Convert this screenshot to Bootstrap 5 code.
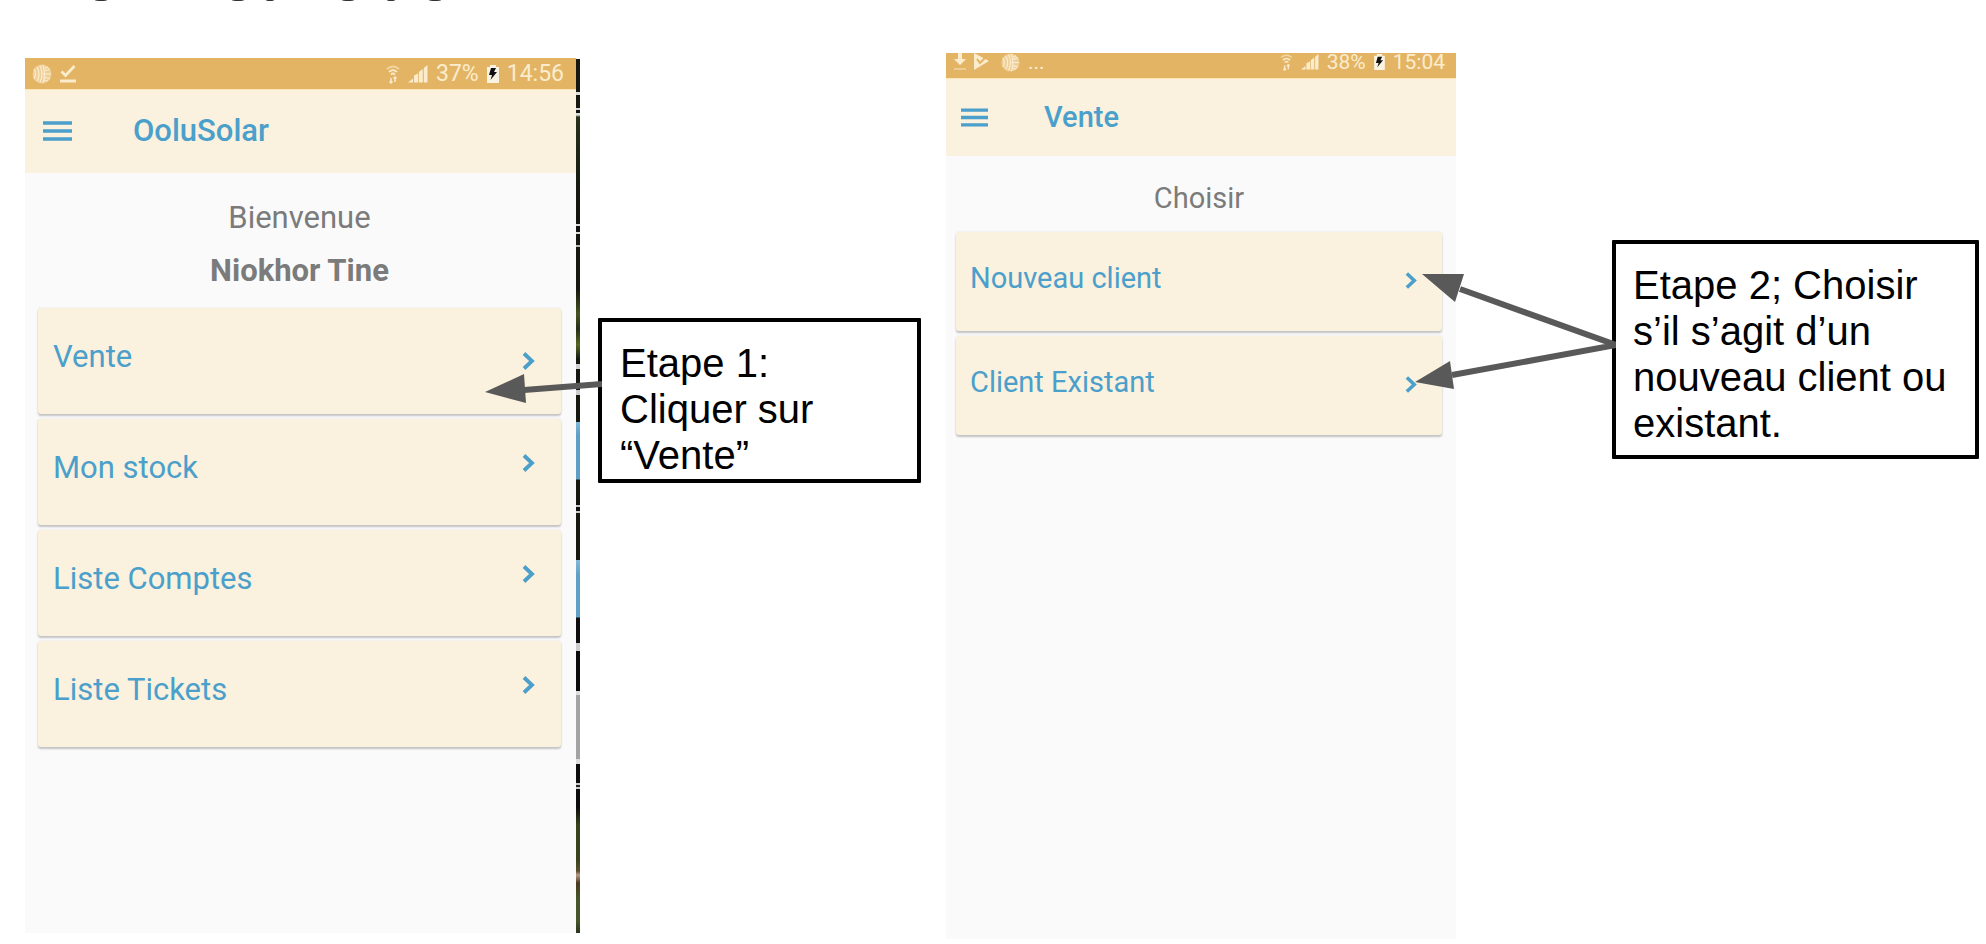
<!DOCTYPE html>
<html lang="fr">
<head>
<meta charset="utf-8">
<meta name="viewport" content="width=device-width, initial-scale=1">
<title>OoluSolar – Vente</title>
<link rel="stylesheet" href="https://cdn.jsdelivr.net/npm/bootstrap@5.3.0/dist/css/bootstrap.min.css">
<style>
  body { background: #fff; font-family: "Liberation Sans", Arial, sans-serif; overflow-x: hidden; }

  /* Slide: phone, note, phone, note, with the margins as their own tracks */
  .slide {
    display: grid;
    min-height: 100vh;
    grid-template-columns:
      minmax(0, 25fr) minmax(0, 555fr) minmax(0, 18fr) minmax(0, 323fr) minmax(0, 25fr)
      minmax(0, 510fr) minmax(0, 156fr) minmax(0, 367fr) minmax(0, 7fr);
  }
  .heading-tail { top: 0; left: 0; }

  .phone { font-family: Roboto, "Liberation Sans", sans-serif; background: #fafafa; }
  .phone-home { grid-column: 2; margin: 58px 0 11px; font-size: 31px; line-height: 36px; }
  .phone-sale { grid-column: 6; margin: 53px 0 5px; font-size: 29px; line-height: 34px; }

  .status { background: #e3b464; color: #fbecce; height: 31px; padding: 0 12px 0 7px; font-size: 23px; line-height: 31px; }
  .phone-sale .status { height: 25px; padding: 0 11px 7px 8px; font-size: 21px; line-height: 18px; }
  .status svg { display: block; flex: none; }

  .appbar { background: #faf1de; border-top: 1px solid #fbe6b4; height: 84px; padding: 0 18px 1px; gap: 61px; }
  .phone-sale .appbar { height: 78px; padding: 0 15px 1px; gap: 56px; }
  .appbar h1 { font-size: inherit; line-height: inherit; font-weight: 500; color: #4b9fcb; margin: 0; }
  .menu-btn { border: 0; background: none; padding: 0; color: #4b9fcb; line-height: 0; }

  .screen { padding: 27px 15px 0 13px; color: #7b7b7b; }
  .phone-sale .screen { padding: 25px 14px 0 10px; }
  .choices { display: grid; gap: 5px; margin-top: 19px; }
  .phone-sale .choices { margin-top: 17px; }
  .user-name { margin-top: 17px; font-weight: 700; }

  .choice {
    display: flex; justify-content: space-between; align-items: flex-start;
    width: 100%; border: 0; border-radius: 3px; text-align: left;
    background: #faf1de; color: #4b9fcb;
    padding: 31px 26px 39px 15px;
    box-shadow: 0 2px 2px #c4c2c2, 0 0 2px #e2dfdc;
  }
  .phone-sale .choice { padding: 29px 25px 36px 14px; }
  .choice svg { flex: none; margin-top: 4px; }
  .choice .chev-low { margin-top: 13px; }
  .phone-sale .choice svg { margin-top: 11px; }

  /* Sliver of the desktop behind the first phone */
  .backdrop {
    flex: none; width: 4px; margin-top: 1px;
    background: linear-gradient(#14180f 0 33px, #ddd 33px 36px, #14180f 36px 49px, #d5d5d5 49px 51px, #111 51px 54px, #ddd 54px 56px,
      #26301a 58px, #161a10 130px, #10140c 165px, #ddd 165px 167px, #111 167px 173px, #ddd 173px 175px, #14180f 175px 186px, #bbb 186px 188px,
      #14180f 188px 230px, #47531f 255px, #262e16 270px, #566622 286px, #14180f 300px 305px, #d0d0d0 305px 310px, #14180f 310px 331px,
      #ccc 331px 336px, #14180f 336px 363px, #7fb7d8 363px, #5f9fc6 376px 420px, #17190f 421px 440px, #10120d 446px, #ccc 446px 448px,
      #111 448px 452px, #ccc 452px 454px, #14180f 454px 501px, #83b9d8 501px, #60a0c6 516px 558px, #0d0e0b 559px 584px, #ccc 584px 592px,
      #0b0b0b 592px 632px, #ddd 632px 636px, #a3a3a6 636px 700px, #ddd 700px 705px, #0b0b0b 705px 724px, #ccc 724px 726px, #222 726px 728px,
      #ccc 728px 730px, #0b0b0b 730px 748px, #38421c 766px 800px, #57502a 812px, #b59a86 816px, #4b3a20 824px, #46562a 840px 862px, #2b341d);
  }

  .note {
    position: relative; align-self: start;
    border: 4px solid #000; background: #fff; color: #000;
    font-size: 40px; line-height: 46px; border-radius: 1px;
  }
  .note-one { grid-column: 4; margin-top: 318px; padding: 18px 60px 1px 18px; }
  .note-two { grid-column: 8; margin-top: 240px; padding: 18px 10px 9px 17px; }
  .note p { margin: 0; }
  /* Arrows lie over the phones, tied to the left edge of their note */
  .arrow { position: absolute; right: 100%; pointer-events: none; }
  .note-one .arrow { top: 48px; }
  .note-two .arrow { top: 24px; }
</style>
</head>
<body>

<svg width="0" height="0" class="position-absolute" aria-hidden="true">
  <defs>
    <symbol id="i-finger" viewBox="0 0 20 20">
      <circle cx="10" cy="10" r="9.500" fill="#fbecce" fill-opacity=".5"/>
      <g fill="none" stroke="#fbecce" stroke-width="1.200">
        <path d="M2 5q3 5 0 10M5 3q4 7 0 14M8 1.500q4 8.500 0 17M11 1q3 9 0 18M11 10h8M12 7l6-2M12 13l6 2M13 4l3-1M12 16l4 1"/>
      </g>
    </symbol>
    <symbol id="i-wifi" viewBox="0 0 14 20">
      <g fill="none" stroke="#fbecce" stroke-width="1.700">
        <path d="M1 5q6-5 12 0" opacity=".6"/><path d="M3 8q4-4 8 0"/><path d="M5 10.500q2-2 4 0"/>
      </g>
      <path d="M5 19v-5M3.500 17.500l1.500 1.500 1.500-1.500M9 18v-5M7.500 14.500L9 13l1.500 1.500" stroke="#fbecce" stroke-width="1.500" fill="none"/>
    </symbol>
    <symbol id="i-signal" viewBox="0 0 20 18">
      <path d="M0 17.500l5-4v4zM6 17.500v-7l4-2v9zM10.800 17.500V7l4-3v13.500zM15.800 17.500V3L19.500 0v17.500z" fill="#fbecce"/>
    </symbol>
    <symbol id="i-battery" viewBox="0 0 12 18">
      <path d="M0 2h3V0h6v2h3v16H0z" fill="#fbf3e2"/>
      <path d="M4 3h5L7 7h3L3.500 15 5 10H2z" fill="#111"/>
    </symbol>
    <symbol id="i-menu" viewBox="0 0 29 20">
      <path d="M0 2h29M0 10h29M0 18h29" stroke="currentColor" stroke-width="3.600"/>
    </symbol>
    <symbol id="i-chev" viewBox="0 0 13 18">
      <path d="M2 1.500L10 9l-8 7.500" fill="none" stroke="currentColor" stroke-width="3.800"/>
    </symbol>
  </defs>
</svg>

<svg class="heading-tail position-absolute" width="460" height="2" aria-hidden="true">
  <g fill="#333"><ellipse cx="101" rx="6" ry="1"/><ellipse cx="238" rx="6" ry="1"/><ellipse cx="270" rx="4" ry="1"/><ellipse cx="348" rx="6" ry="1"/><ellipse cx="391" rx="4" ry="1"/><ellipse cx="435" rx="6" ry="1"/></g>
</svg>

<main class="slide">

  <section class="phone phone-home d-flex" aria-label="Accueil">
    <div class="flex-grow-1">
      <div class="status d-flex align-items-center">
        <svg width="20" height="20"><use href="#i-finger"/></svg>
        <svg width="16" height="18" viewBox="0 0 16 18" class="ms-2"><path d="M1.500 6.500l4 4L14.500 1M0 16h16" fill="none" stroke="#fbecce" stroke-width="2.800"/></svg>
        <div class="d-flex align-items-center ms-auto">
          <svg width="14" height="20" class="me-2"><use href="#i-wifi"/></svg>
          <svg width="20" height="18" class="me-2"><use href="#i-signal"/></svg>
          <span>37%</span>
          <svg width="12" height="18" class="ms-2 me-2"><use href="#i-battery"/></svg>
          <span>14:56</span>
        </div>
      </div>
      <header class="appbar d-flex align-items-center">
        <button type="button" class="menu-btn" aria-label="Menu"><svg width="29" height="20"><use href="#i-menu"/></svg></button>
        <h1>OoluSolar</h1>
      </header>
      <div class="screen">
        <div class="text-center">Bienvenue</div>
        <div class="text-center user-name">Niokhor Tine</div>
        <nav class="choices">
          <button type="button" class="choice">Vente<svg class="chev-low" width="13" height="18"><use href="#i-chev"/></svg></button>
          <button type="button" class="choice">Mon stock<svg width="13" height="18"><use href="#i-chev"/></svg></button>
          <button type="button" class="choice">Liste Comptes<svg width="13" height="18"><use href="#i-chev"/></svg></button>
          <button type="button" class="choice">Liste Tickets<svg width="13" height="18"><use href="#i-chev"/></svg></button>
        </nav>
      </div>
    </div>
    <div class="backdrop"></div>
  </section>

  <aside class="note note-one">
    <p>Etape 1:<br>Cliquer sur<br>“Vente”</p>
    <svg class="arrow" width="118" height="44" viewBox="0 0 118 44" aria-hidden="true">
      <path d="M118 14L40 20" stroke="#595959" stroke-width="6"/>
      <path d="M1 22L40 4l2 29z" fill="#595959"/>
    </svg>
  </aside>

  <section class="phone phone-sale" aria-label="Vente">
    <div class="status d-flex align-items-center">
      <svg width="12" height="18" viewBox="0 0 12 18"><path d="M4 0h4v6h4l-6 6-6-6h4z" fill="#fbecce"/><path d="M0 16h12" stroke="#fbecce" stroke-width="1.500" opacity=".6"/></svg>
      <svg width="15" height="18" viewBox="0 0 15 18" class="ms-2 me-2"><path d="M0 0l15 8L0 17z" fill="#fbecce"/><path d="M3 6l3 4 6-6" fill="none" stroke="#e3b464" stroke-width="2"/></svg>
      <svg width="19" height="19" class="ms-1"><use href="#i-finger"/></svg>
      <span class="ms-2">...</span>
      <div class="d-flex align-items-center ms-auto">
        <svg width="13" height="18" class="me-2"><use href="#i-wifi"/></svg>
        <svg width="18" height="16" class="me-2"><use href="#i-signal"/></svg>
        <span>38%</span>
        <svg width="11" height="16" class="ms-2 me-2"><use href="#i-battery"/></svg>
        <span>15:04</span>
      </div>
    </div>
    <header class="appbar d-flex align-items-center">
      <button type="button" class="menu-btn" aria-label="Menu"><svg width="27" height="19"><use href="#i-menu"/></svg></button>
      <h1>Vente</h1>
    </header>
    <div class="screen">
      <div class="text-center">Choisir</div>
      <nav class="choices">
        <button type="button" class="choice">Nouveau client<svg width="12" height="17"><use href="#i-chev"/></svg></button>
        <button type="button" class="choice">Client Existant<svg width="12" height="17"><use href="#i-chev"/></svg></button>
      </nav>
    </div>
  </section>

  <aside class="note note-two">
    <p>Etape 2; Choisir s’il s’agit d’un nouveau client ou existant.</p>
    <svg class="arrow" width="204" height="130" viewBox="0 0 204 130" aria-hidden="true">
      <path d="M204 77L48 21M204 77L40 107" stroke="#595959" stroke-width="6" fill="none"/>
      <path d="M10 6h42l-9 28zM3 114l35-21 4 28z" fill="#595959"/>
    </svg>
  </aside>

</main>
<script src="https://cdn.jsdelivr.net/npm/bootstrap@5.3.0/dist/js/bootstrap.bundle.min.js"></script>
</body>
</html>
